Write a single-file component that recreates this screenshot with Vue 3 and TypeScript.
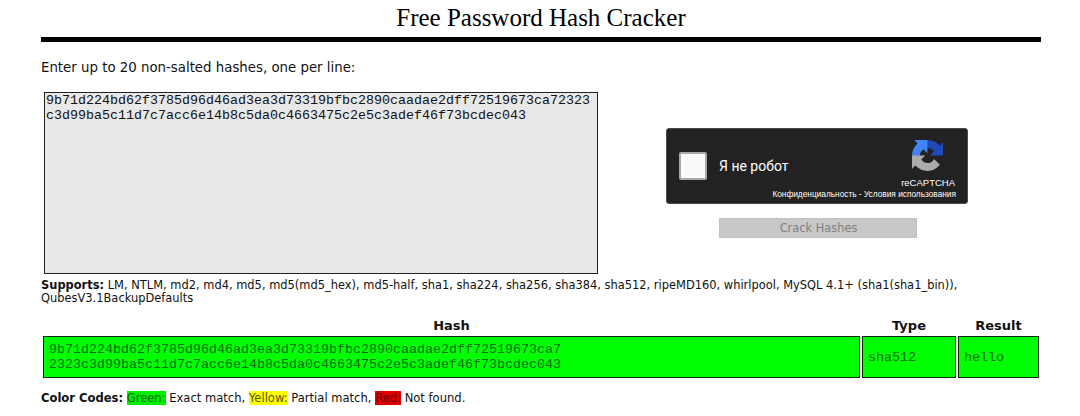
<script setup lang="ts">
const input = `9b71d224bd62f3785d96d46ad3ea3d73319bfbc2890caadae2dff72519673ca72323
c3d99ba5c11d7c7acc6e14b8c5da0c4663475c2e5c3adef46f73bcdec043`
const hash = `9b71d224bd62f3785d96d46ad3ea3d73319bfbc2890caadae2dff72519673ca7
2323c3d99ba5c11d7c7acc6e14b8c5da0c4663475c2e5c3adef46f73bcdec043`
</script>

<template>
  <main class="page">
    <h1 class="title">Free Password Hash Cracker</h1>
    <div class="rule"></div>
    <p class="intro">Enter up to 20 non-salted hashes, one per line:</p>
    <div class="form">
      <textarea class="hashes" readonly wrap="off" :value="input"></textarea>
      <div class="side">
        <div class="captcha">
          <span class="check"></span>
          <span class="robot">Я не робот</span>
          <div class="brand">
            <svg class="logo" viewBox="0 0 64 64" aria-hidden="true">
              <path fill="#1f48b8" d="M64 31.955l-.033-1.37V4.687l-7.16 7.16C50.948 4.674 42.033.093 32.05.093c-10.4 0-19.622 4.96-25.458 12.64l11.736 11.86a15.55 15.55 0 0 1 4.754-5.334c2.05-1.6 4.952-2.906 8.968-2.906.485 0 .86.057 1.135.163 4.976.393 9.288 3.14 11.828 7.124l-8.307 8.307 32.294.01"/>
              <path fill="#4285f4" d="M31.862.094l-1.37.033H4.594l7.16 7.16C4.58 13.147 0 22.06 0 32.046c0 10.4 4.96 19.622 12.64 25.458l11.86-11.736a15.55 15.55 0 0 1-5.334-4.754c-1.6-2.05-2.906-4.952-2.906-8.968 0-.485.057-.86.163-1.135.393-4.976 3.14-9.288 7.124-11.828l8.307 8.307L31.862.094"/>
              <path fill="#ababab" d="M.001 32.045l.033 1.37v25.898l7.16-7.16c5.86 7.173 14.774 11.754 24.76 11.754 10.4 0 19.622-4.96 25.458-12.64L45.677 39.4a15.55 15.55 0 0 1-4.754 5.334c-2.05 1.6-4.952 2.906-8.968 2.906-.485 0-.86-.057-1.135-.163-4.976-.393-9.288-3.14-11.828-7.124l8.307-8.307-32.294-.01"/>
            </svg>
            <span class="brand-name">reCAPTCHA</span>
            <span class="brand-links">Конфиденциальность - Условия использования</span>
          </div>
        </div>
        <button class="crack" type="button" disabled>Crack Hashes</button>
      </div>
    </div>
    <p class="supports"><b>Supports:</b> LM, NTLM, md2, md4, md5, md5(md5_hex), md5-half, sha1, sha224, sha256, sha384, sha512, ripeMD160, whirlpool, MySQL 4.1+ (sha1(sha1_bin)), QubesV3.1BackupDefaults</p>
    <table class="results">
      <thead>
        <tr><th>Hash</th><th class="col-type">Type</th><th class="col-result">Result</th></tr>
      </thead>
      <tbody>
        <tr><td class="hash-cell">{{ hash }}</td><td>sha512</td><td>hello</td></tr>
      </tbody>
    </table>
    <p class="codes"><b>Color Codes:</b> <span class="green">Green:</span> Exact match, <span class="yellow">Yellow:</span> Partial match, <span class="red">Red:</span> Not found.</p>
  </main>
</template>

<style>
html, body { margin: 0; background: #fff; }
</style>

<style scoped>
.page {
  box-sizing: border-box;
  width: 1080px;
  height: 416px;
  padding: 0 39px 0 41px;
  overflow: hidden;
  font-family: "DejaVu Sans", Verdana, sans-serif;
  font-size: 11.45px;
  line-height: 13px;
  color: #111;
}
.title {
  margin: 0;
  height: 37px;
  font: 400 25px/36px "Liberation Serif", "Times New Roman", serif;
  text-align: center;
  color: #000;
}
.rule { height: 5px; background: #000; }
.intro { margin: 18px 0 0; height: 15px; line-height: 15px; font-size: 13.33px; }
.form { display: flex; margin-top: 17px; }
.hashes {
  box-sizing: border-box;
  flex: none;
  display: block;
  width: 554px;
  height: 182px;
  margin: 0 0 0 3px;
  padding: 0 1px;
  border: 1px solid #222;
  border-radius: 0;
  outline: 0;
  resize: none;
  overflow: hidden;
  background: #e8e8e8;
  color: #111;
  font: 13.33px/15px "Liberation Mono", "Courier New", monospace;
}
.side {
  display: flex;
  flex-direction: column;
  align-items: center;
  width: 302px;
  margin: 36px 0 0 68px;
}
.captcha {
  box-sizing: border-box;
  position: relative;
  display: flex;
  align-items: center;
  width: 302px;
  height: 76px;
  padding-left: 12px;
  background: #222;
  border: 1px solid #4a4a4a;
  border-radius: 3px;
  color: #fff;
}
.check {
  box-sizing: border-box;
  width: 28px;
  height: 28px;
  background: #fafafa;
  border: 2px solid #a8a8a8;
  border-radius: 2px;
}
.robot { margin-left: 12px; font: 14px/17px Roboto, sans-serif; }
.brand {
  position: absolute;
  right: 12px;
  top: 11px;
  display: flex;
  flex-direction: column;
  align-items: flex-end;
  font-family: "Liberation Sans", Arial, sans-serif;
}
.logo { display: block; width: 31px; height: 31px; margin: 0 12px 1px 0; }
.brand-name { margin-top: 5px; font-size: 9.5px; line-height: 12px; }
.brand-links { margin: 0 -1px 0 0; font-size: 8.3px; line-height: 11px; white-space: nowrap; }
.crack {
  box-sizing: border-box;
  width: 198px;
  height: 20px;
  margin: 14px 0 0 2px;
  padding: 0 0 0 1px;
  border: 1px solid #c0c0c0;
  border-radius: 0;
  background: #c8c8c8;
  color: #808080;
  font: 11.4px/18px "DejaVu Sans", sans-serif;
}
.supports { margin: 5px 0 0; width: 1000px; }
.results {
  width: 1000px;
  margin-top: 12px;
  border-collapse: separate;
  border-spacing: 2px 2px;
  table-layout: fixed;
  font: inherit;
}
.results th {
  padding: 0;
  height: 15px;
  vertical-align: top;
  font: 700 13px/14px "DejaVu Sans", sans-serif;
  text-align: center;
}
.col-type { width: 94px; }
.col-result { width: 81px; }
.results td {
  box-sizing: border-box;
  height: 42px;
  padding: 0 5px;
  background: #00ff00;
  border: 1px solid #0b2a0b;
  color: #0a6d0a;
  font: 13.33px/15px "Liberation Mono", "Courier New", monospace;
}
.hash-cell { white-space: pre; }
.codes { margin: 11px 0 0; line-height: 14px; font-size: 11.56px; }
.green { background: #00ee00; color: #0a6d0a; }
.yellow { background: #ffff00; color: #555500; }
.red { background: #e00000; color: #660000; }
</style>
